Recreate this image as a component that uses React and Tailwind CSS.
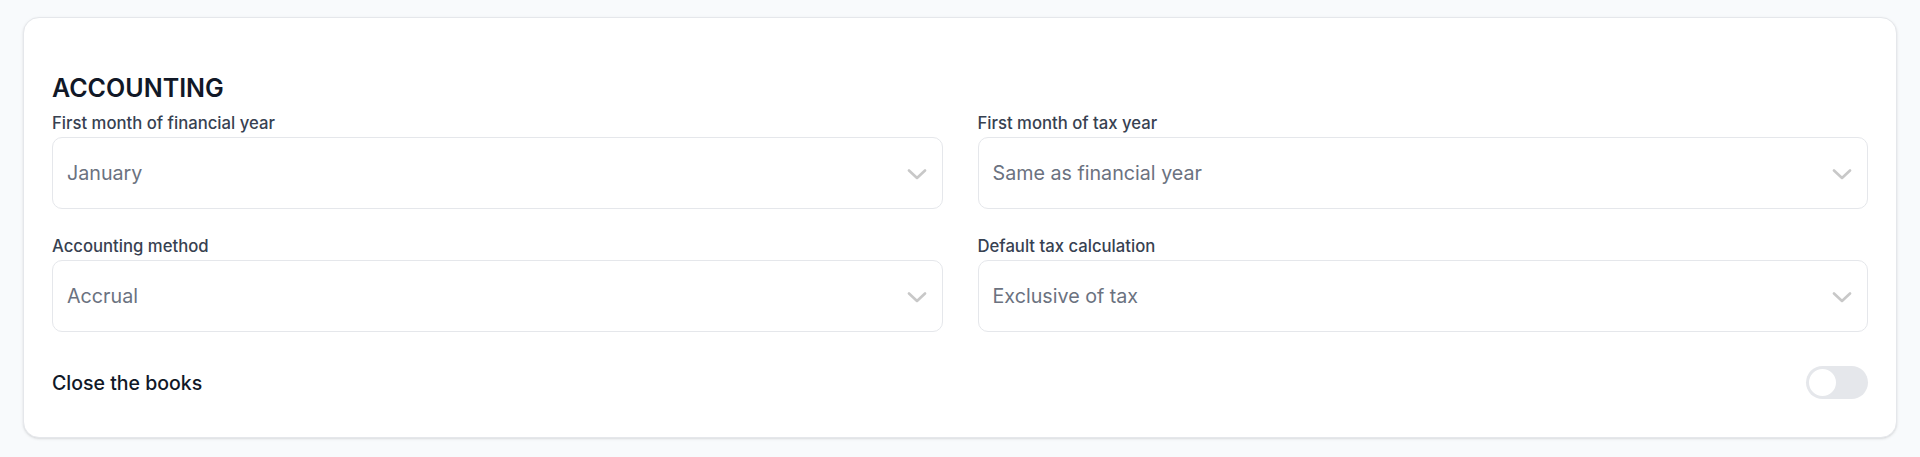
import React, { useState } from 'react'

const fields = [
  { label: 'First month of financial year', value: 'January' },
  { label: 'First month of tax year', value: 'Same as financial year' },
  { label: 'Accounting method', value: 'Accrual' },
  { label: 'Default tax calculation', value: 'Exclusive of tax' },
]

function Chevron() {
  return (
    <svg width="20" height="11" viewBox="0 0 20 11" fill="none" className="shrink-0">
      <path d="M2 1.5l8 7.5 8-7.5" stroke="#c8c8c8" strokeWidth="2.6" strokeLinecap="round" strokeLinejoin="round" />
    </svg>
  )
}

function SelectField({ label, value }) {
  return (
    <div className="flex flex-col">
      <label className="text-[16.7px] leading-6 font-medium text-[#374151]">{label}</label>
      <button
        type="button"
        className="mt-[2px] h-[72px] w-full rounded-[10px] border border-[#e5e7eb] bg-white pl-[14px] pr-[15px] pt-[2px] flex items-center justify-between text-left"
      >
        <span className="text-[19.7px] text-[#6b7280]">{value}</span>
        <Chevron />
      </button>
    </div>
  )
}

export default function App() {
  const [closed, setClosed] = useState(false)

  return (
    <div className="min-h-screen bg-[#f8fafc] px-[23px] pt-[17px] pb-[19px]" style={{ fontFamily: 'Inter, "Noto Sans", sans-serif' }}>
      <div className="rounded-2xl border border-[#e5e7eb] bg-white shadow-sm px-[28px] pt-[54px] pb-[38px]">
        <h2 className="text-[25px] leading-8 font-semibold text-[#111827]">ACCOUNTING</h2>

        <div className="mt-[7px] grid grid-cols-2 gap-x-[35px] gap-y-[25px]">
          {fields.map((f) => (
            <SelectField key={f.label} label={f.label} value={f.value} />
          ))}
        </div>

        <div className="mt-[34px] flex items-center justify-between">
          <span className="text-[19.5px] leading-7 font-medium text-[#111827]">Close the books</span>
          <button
            type="button"
            onClick={() => setClosed(!closed)}
            className={
              closed
                ? 'w-[62px] h-[33px] rounded-full bg-[#2563eb] flex items-center justify-end px-px'
                : 'w-[62px] h-[33px] rounded-full bg-[#e5e7eb] flex items-center justify-start px-px'
            }
            aria-label="Close the books"
          >
            <span className="block w-[31px] h-[31px] rounded-full bg-white border-2 border-[#e5e7eb]" />
          </button>
        </div>
      </div>
    </div>
  )
}
